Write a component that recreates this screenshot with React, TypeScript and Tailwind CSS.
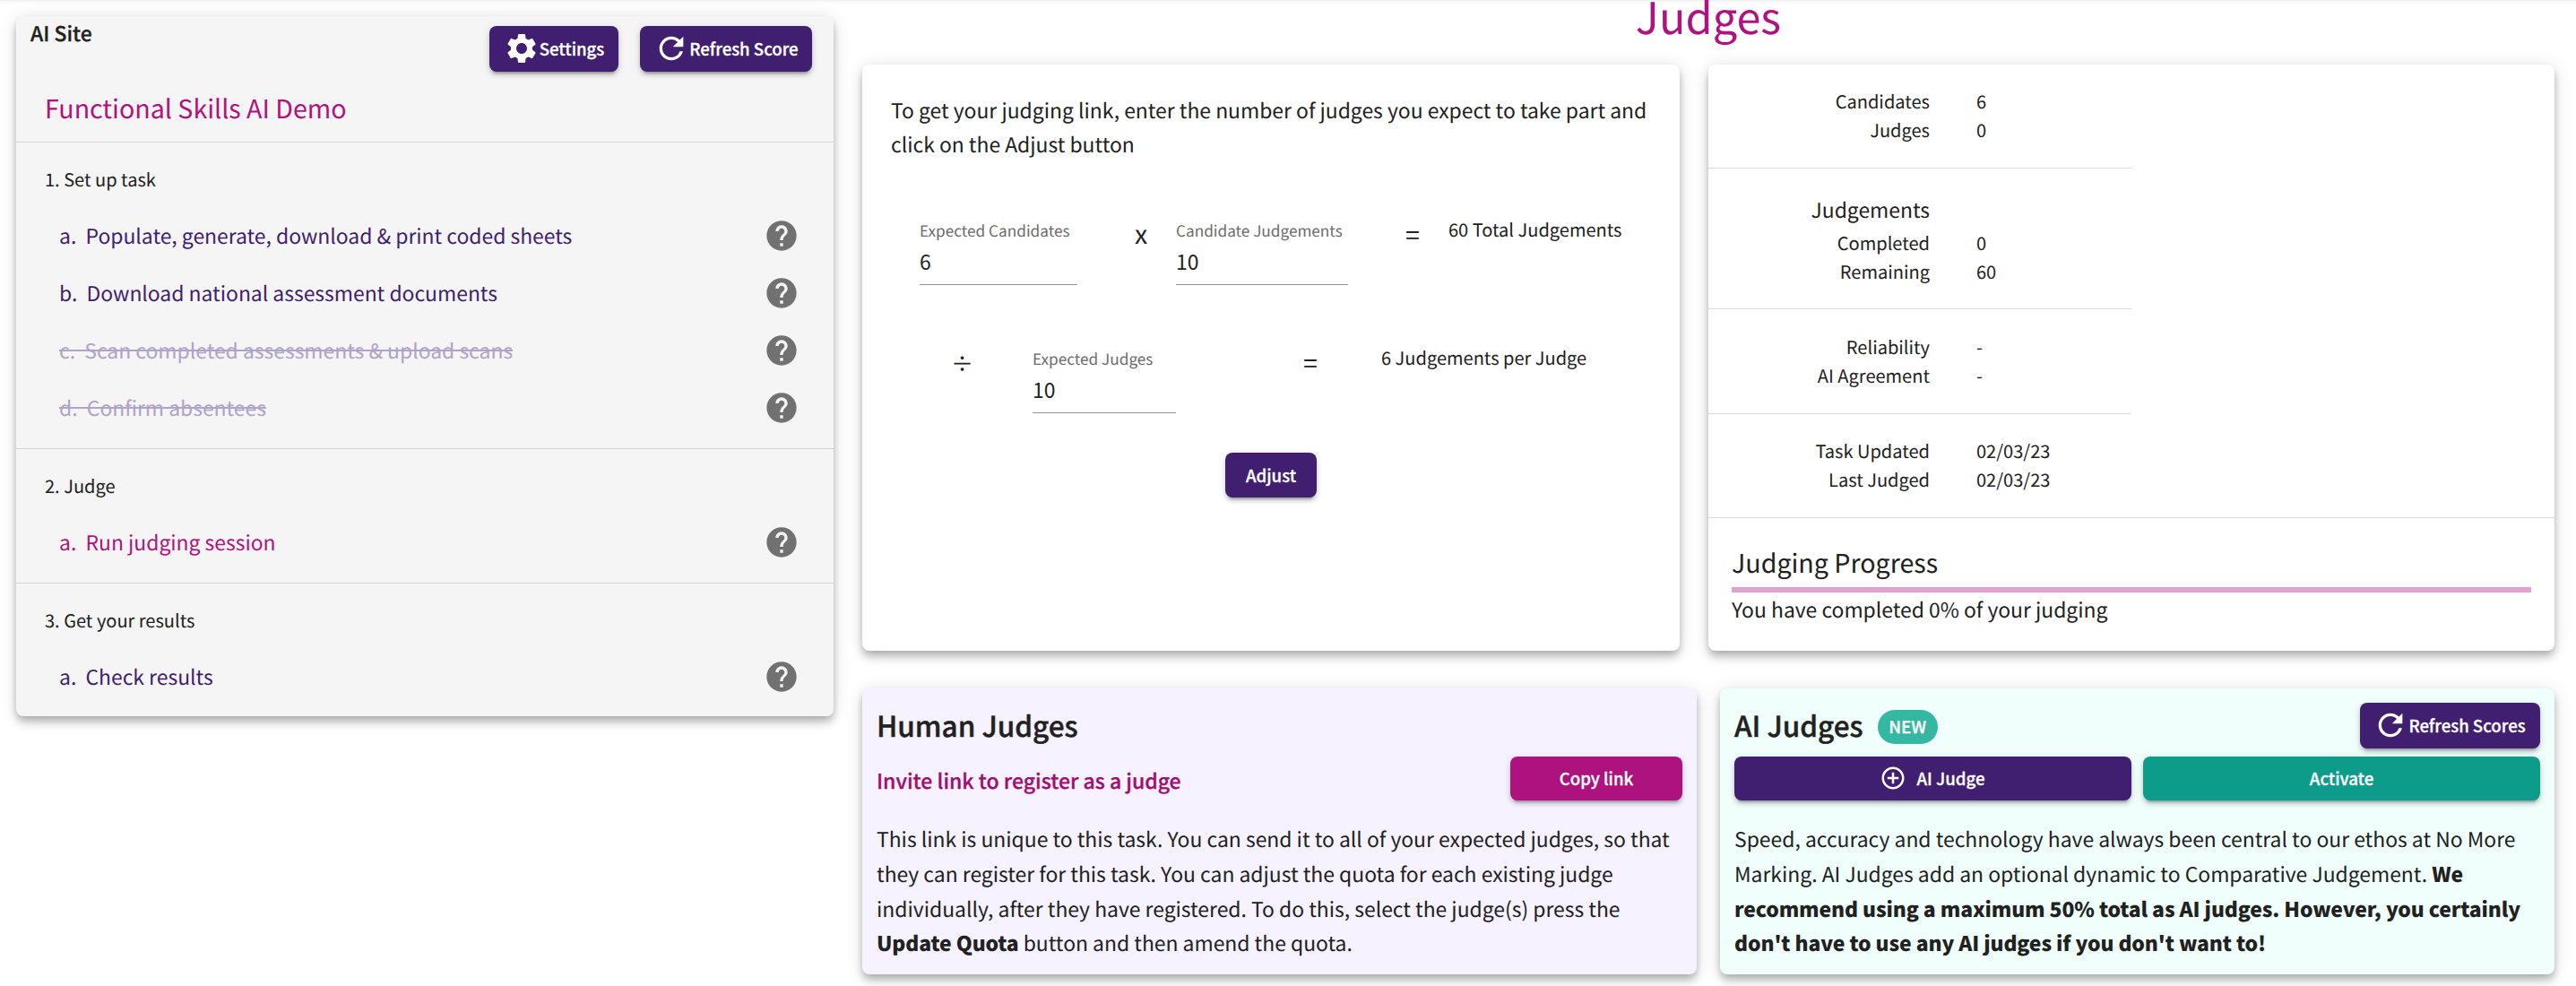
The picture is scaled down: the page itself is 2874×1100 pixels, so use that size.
import type { ReactNode } from 'react';
import clsx from 'clsx';
import { MdAddCircleOutline, MdHelp, MdRefresh, MdSettings } from 'react-icons/md';

interface Step {
  letter: string;
  label: string;
  state?: 'active' | 'disabled';
}

interface StepGroup {
  title: string;
  steps: Step[];
}

const groups: StepGroup[] = [
  {
    title: '1. Set up task',
    steps: [
      { letter: 'a.', label: 'Populate, generate, download & print coded sheets' },
      { letter: 'b.', label: 'Download national assessment documents' },
      { letter: 'c.', label: 'Scan completed assessments & upload scans', state: 'disabled' },
      { letter: 'd.', label: 'Confirm absentees', state: 'disabled' },
    ],
  },
  { title: '2. Judge', steps: [{ letter: 'a.', label: 'Run judging session', state: 'active' }] },
  { title: '3. Get your results', steps: [{ letter: 'a.', label: 'Check results' }] },
];

interface CardProps {
  className?: string;
  children: ReactNode;
}

function Card({ className, children }: Readonly<CardProps>) {
  return (
    <section
      className={clsx(
        'rounded-lg shadow-[0_4px_8px_-2px_rgba(0,0,0,0.2),0_8px_10px_0_rgba(0,0,0,0.14),0_2px_20px_0_rgba(0,0,0,0.12)]',
        className,
      )}>
      {children}
    </section>
  );
}

interface ButtonProps {
  className?: string;
  icon?: ReactNode;
  children: ReactNode;
}

function Button({ className, icon, children }: Readonly<ButtonProps>) {
  return (
    <button
      type="button"
      className={clsx(
        'flex shrink-0 items-center justify-center whitespace-nowrap rounded-lg pb-px text-[18.6px] font-medium leading-8 text-white shadow-[0_6px_2px_-4px_rgba(0,0,0,0.2),0_4px_4px_0_rgba(0,0,0,0.14),0_2px_10px_0_rgba(0,0,0,0.12)] [-webkit-text-stroke:0.3px]',
        className,
      )}>
      {icon}
      <span>{children}</span>
    </button>
  );
}

function StepRow({ step }: Readonly<{ step: Step }>) {
  return (
    <li className="flex h-16 items-center justify-between pl-12 pr-[38px]">
      <a
        className={clsx(
          'whitespace-pre pb-[3px] text-[22.9px] leading-9',
          !step.state && 'text-[#401e70]',
          step.state === 'active' && 'text-[#b0127f]',
          step.state === 'disabled' && 'text-[#b0a2c8] line-through',
        )}>
        {`${step.letter}  ${step.label}`}
      </a>
      <MdHelp className="size-10 text-[#717171]" />
    </li>
  );
}

function TaskPanel() {
  return (
    <Card className="h-[781px] w-[912px] shrink-0 bg-[#f5f5f5]">
      <div className="flex h-[82px] items-start justify-between pl-4 pr-6">
        <h3 className="text-[22.9px] font-medium leading-9 [-webkit-text-stroke:0.3px]">AI Site</h3>
        <div className="mt-[11px] flex gap-6">
          <Button className="h-[51px] w-36 bg-[#401e70]" icon={<MdSettings className="size-10" />}>
            Settings
          </Button>
          <Button className="h-[51px] w-48 bg-[#401e70]" icon={<MdRefresh className="size-10" />}>
            Refresh Score
          </Button>
        </div>
      </div>
      <h2 className="mb-4 pl-8 text-[28.6px] leading-[42px] text-[#b0127f]">
        Functional Skills AI Demo
      </h2>
      {groups.map((group) => (
        <div key={group.title} className="border-t border-[#d4d4d4] pb-[13px] pt-5">
          <h4 className="mb-2.5 pl-8 text-[20.05px] leading-[42px]">{group.title}</h4>
          <ul>
            {group.steps.map((step) => (
              <StepRow key={step.label} step={step} />
            ))}
          </ul>
        </div>
      ))}
    </Card>
  );
}

interface FieldProps {
  label: string;
  value: string;
  className?: string;
}

function Field({ label, value, className }: Readonly<FieldProps>) {
  return (
    <label className={clsx('block shrink-0 border-b border-[#949494] pt-px', className)}>
      <span className="block whitespace-nowrap text-[17.2px] leading-7 text-[#6b6b6b]">{label}</span>
      <input
        type="text"
        defaultValue={value}
        className="mb-2 mt-0.5 block h-9 w-full text-[22.9px] leading-9"
      />
    </label>
  );
}

function QuotaCard() {
  return (
    <Card className="h-[654px] w-[912px] shrink-0 bg-white px-8 pt-[31px]">
      <p className="text-[22.9px] leading-[38px]">
        To get your judging link, enter the number of judges you expect to take part and click on
        the Adjust button
      </p>
      <div className="mt-[63px] flex h-[143px] items-start pl-8">
        <Field label="Expected Candidates" value="6" className="w-44" />
        <span className="mt-[3px] w-[110px] pl-16 text-[28.6px] leading-8">x</span>
        <Field label="Candidate Judgements" value="10" className="w-48" />
        <span className="mt-1 w-28 pl-16 text-[28.6px] leading-8">=</span>
        <span className="text-[20.05px] leading-7">60 Total Judgements</span>
      </div>
      <div className="flex h-[120px] items-start pl-[67px]">
        <span className="mt-1 w-[91px] text-[25px] leading-8">÷</span>
        <Field label="Expected Judges" value="10" className="w-40" />
        <span className="mt-1 w-[229px] pl-[142px] text-[28.6px] leading-8">=</span>
        <span className="text-[20.05px] leading-7">6 Judgements per Judge</span>
      </div>
      <Button className="mx-auto h-[50px] w-[102px] bg-[#401e70]">Adjust</Button>
    </Card>
  );
}

function Stat({ label, value }: Readonly<{ label: string; value: string }>) {
  return (
    <div className="flex gap-[52px] text-[20.05px] leading-8">
      <dt className="w-[247px] text-right">{label}</dt>
      <dd>{value}</dd>
    </div>
  );
}

function StatsCard() {
  return (
    <Card className="h-[654px] w-[944px] bg-white">
      <dl className="w-[472px]">
        <div className="h-[116px] border-b border-[#dcdcdc] pt-[25px]">
          <Stat label="Candidates" value="6" />
          <Stat label="Judges" value="0" />
        </div>
        <div className="h-[157px] border-b border-[#dcdcdc] pt-[25px]">
          <p className="mb-0.5 w-[247px] text-right text-[22.9px] leading-10">Judgements</p>
          <Stat label="Completed" value="0" />
          <Stat label="Remaining" value="60" />
        </div>
        <div className="h-[117px] border-b border-[#dcdcdc] pt-[26px]">
          <Stat label="Reliability" value="-" />
          <Stat label="AI Agreement" value="-" />
        </div>
        <div className="h-[115px] pt-[25px]">
          <Stat label="Task Updated" value="02/03/23" />
          <Stat label="Last Judged" value="02/03/23" />
        </div>
      </dl>
      <div className="border-t border-[#dcdcdc] px-[26px] pt-[29px]">
        <h3 className="text-[28.6px] leading-[42px]">Judging Progress</h3>
        <div className="mt-1.5 h-1.5 bg-[#e1a2cf]" />
        <p className="text-[22.9px] leading-9">You have completed 0% of your judging</p>
      </div>
    </Card>
  );
}

function HumanJudgesCard() {
  return (
    <Card className="h-[319px] w-[931px] bg-[#f6f2ff] px-4 pt-4">
      <h3 className="h-[60px] text-[31.5px] font-medium leading-[51px] [-webkit-text-stroke:0.4px]">
        Human Judges
      </h3>
      <div className="flex h-[49px] items-center justify-between">
        <p className="pt-[3px] text-[23px] font-medium leading-9 text-[#a10d72] [-webkit-text-stroke:0.3px]">
          Invite link to register as a judge
        </p>
        <Button className="h-[49px] w-48 bg-[#ad127e]">Copy link</Button>
      </div>
      <p className="mt-[23px] text-[22.9px] leading-[38.8px]">
        This link is unique to this task. You can send it to all of your expected judges, so that
        they can register for this task. You can adjust the quota for each existing judge
        individually, after they have registered. To do this, select the judge(s) press the{' '}
        <b className="font-black tracking-[-0.11px]">Update Quota</b> button and then amend the
        quota.
      </p>
    </Card>
  );
}

function AiJudgesCard() {
  return (
    <Card className="h-[319px] w-[931px] bg-[#f0fffc] px-4 pt-4">
      <div className="flex h-[60px] items-start justify-between">
        <div className="flex items-start gap-4">
          <h3 className="text-[31.5px] font-medium leading-[51px] [-webkit-text-stroke:0.4px]">
            AI Judges
          </h3>
          <span className="mt-2 flex h-[38px] w-[67px] items-center justify-center rounded-full bg-[#34b8a1] text-[18.8px] font-medium leading-8 text-white [-webkit-text-stroke:0.3px]">
            NEW
          </span>
        </div>
        <Button
          className="h-[51px] w-[201px] bg-[#401e70] pr-0.5"
          icon={<MdRefresh className="size-10" />}>
          Refresh Scores
        </Button>
      </div>
      <div className="grid grid-cols-2 gap-[13px]">
        <Button
          className="h-[49px] gap-3 bg-[#401e70] pr-0.5"
          icon={<MdAddCircleOutline className="size-[30px]" />}>
          AI Judge
        </Button>
        <Button className="h-[49px] bg-[#0e9c8a]">Activate</Button>
      </div>
      <p className="mt-[23px] text-[22.9px] leading-[38.8px]">
        Speed, accuracy and technology have always been central to our ethos at No More Marking. AI
        Judges add an optional dynamic to Comparative Judgement.{' '}
        <b className="font-black tracking-[-0.11px]">
          We recommend using a maximum 50% total as AI judges. However, you certainly don't have to
          use any AI judges if you don't want to!
        </b>
      </p>
    </Card>
  );
}

export default function App() {
  return (
    <div className="flex h-[1100px] w-[2874px] items-start gap-8 overflow-hidden bg-white pl-[18px] font-['Noto_Sans_CJK_SC',sans-serif] text-[#212121] shadow-[inset_0_5px_5px_-5px_rgba(0,0,0,0.12)] [text-rendering:geometricPrecision]">
      <div className="pt-[18px]">
        <TaskPanel />
      </div>
      <main className="w-[1888px]">
        <h1 className="-mt-3 h-[84px] text-center text-[48.7px] leading-[60px] text-[#b0127f]">
          Judges
        </h1>
        <div className="flex gap-8">
          <QuotaCard />
          <StatsCard />
        </div>
        <div className="mt-[42px] flex justify-between">
          <HumanJudgesCard />
          <AiJudgesCard />
        </div>
      </main>
    </div>
  );
}
